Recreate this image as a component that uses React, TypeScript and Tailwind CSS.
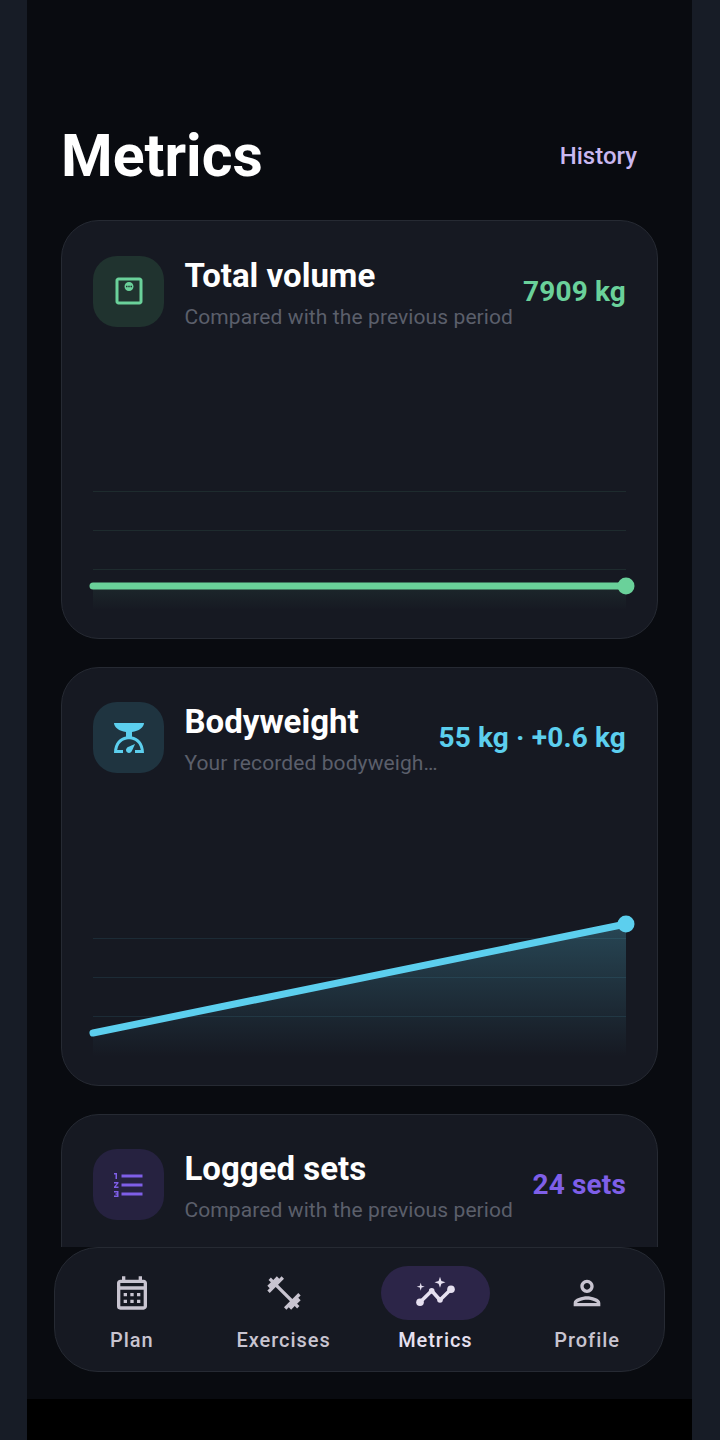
import type { ReactNode } from "react";
import {
  MdFitnessCenter,
  MdFormatListNumbered,
  MdOutlineCalendarMonth,
  MdOutlineMonitorWeight,
  MdOutlinePerson,
  MdScale,
} from "react-icons/md";

const Chart = ({ color, id, y0, y1, fill }: { color: string; id: string; y0: number; y1: number; fill: number }) => (
  <svg width="597" height="240" viewBox="0 0 597 240" className="block">
    <defs>
      <linearGradient id={id} x1="0" y1="0" x2="0" y2="1">
        <stop offset="0" stopColor={color} stopOpacity={fill} />
        <stop offset="1" stopColor={color} stopOpacity="0" />
      </linearGradient>
    </defs>
    <path d={`M32 ${y0}L565 ${y1}V230H32Z`} fill={`url(#${id})`} />
    {[111, 150, 189].map((y) => (
      <line key={y} x1="32" x2="565" y1={y + 0.5} y2={y + 0.5} stroke={color} strokeOpacity="0.1" />
    ))}
    <line x1="32" y1={y0} x2="565" y2={y1} stroke={color} strokeWidth="7" strokeLinecap="round" />
    <circle cx="565" cy={y1} r="8.5" fill={color} />
  </svg>
);

const SparkGraph = () => (
  <svg width="40" height="40" viewBox="0 0 40 40" fill="none">
    <path d="M5 29.3L16.7 17.7L25 27L36 16.3" stroke="currentColor" strokeWidth="3.6" strokeLinejoin="round" strokeLinecap="round" />
    <circle cx="5" cy="29.3" r="3.8" fill="currentColor" />
    <circle cx="16.7" cy="17.7" r="2.8" fill="currentColor" />
    <circle cx="25" cy="27" r="2.8" fill="currentColor" />
    <circle cx="36" cy="16.3" r="3.8" fill="currentColor" />
    <path d="M25 3.8L26.4 7.9L30.5 9.3L26.4 10.7L25 14.8L23.6 10.7L19.5 9.3L23.6 7.9Z" fill="currentColor" />
    <path d="M5.7 9.7L6.6 12.8L9.7 13.7L6.6 14.6L5.7 17.7L4.8 14.6L1.7 13.7L4.8 12.8Z" fill="currentColor" />
  </svg>
);

const MetricCard = ({
  icon,
  boxClass,
  title,
  subtitle,
  value,
  valueClass,
  children,
}: {
  icon: ReactNode;
  boxClass: string;
  title: string;
  subtitle: string;
  value: string;
  valueClass: string;
  children?: ReactNode;
}) => (
  <section className="h-[418.8px] flex-none rounded-[38px] border border-[#262a33] bg-[#161922]">
    <div className="mt-[34.6px] flex h-[71px] items-center px-[31px]">
      <div className={`flex h-[71px] w-[71px] flex-none items-center justify-center rounded-[24px] ${boxClass}`}>
        {icon}
      </div>
      <div className="ml-[20.5px] min-w-0 flex-1 self-start">
        <div className="mt-px text-[33px] font-bold leading-[38px] text-white">{title}</div>
        <div className="mt-[8px] whitespace-nowrap text-[21px] leading-[28px] tracking-[0.1px] text-[#5b5f6b]">{subtitle}</div>
      </div>
      <div className={`ml-[2px] flex-none pt-px text-[28px] font-bold tracking-[0.15px] ${valueClass}`}>{value}</div>
    </div>
    <div className="-mx-px mt-[53.4px]">{children}</div>
  </section>
);

const NavItem = ({ icon, label, active }: { icon: ReactNode; label: string; active?: boolean }) => (
  <div className={`flex flex-col items-center ${active ? "text-[#e6e0f0]" : "text-[#c8c4d0]"}`}>
    <div className={`flex h-[54px] w-[109px] items-center justify-center rounded-full ${active ? "bg-[#2c2548]" : ""}`}>
      {icon}
    </div>
    <div className="mt-[6px] text-[20px] font-medium leading-[28px] tracking-[0.95px]">{label}</div>
  </div>
);

export default function App() {
  return (
    <div className="flex h-[1440px] w-[720px] overflow-hidden bg-black font-['Roboto',sans-serif]">
      <div className="w-[27px] flex-none bg-[#171c26]" />
      <div className="h-[1399px] w-[665px] flex-none bg-[#090b10]">
        <div className="h-[1247px] overflow-hidden">
          <div className="flex h-[220px] items-end justify-between pb-[28px] pl-[34px] pr-[55px]">
            <h1 className="text-[59px] font-bold leading-[72px] text-white">Metrics</h1>
            <span className="pb-[20px] text-[24px] font-medium leading-[32px] text-[#c9b8f0]">History</span>
          </div>
          <div className="flex flex-col gap-[28px] px-[34px]">
            <MetricCard
              icon={<MdOutlineMonitorWeight size={36} color="#6ad19a" />}
              boxClass="bg-[#20332f]"
              title="Total volume"
              subtitle="Compared with the previous period"
              value="7909 kg"
              valueClass="text-[#6ad19a]"
            >
              <Chart color="#6ad19a" id="fill-volume" y0={206} y1={206} fill={0.08} />
            </MetricCard>
            <MetricCard
              icon={<MdScale size={36} color="#5ccfee" />}
              boxClass="bg-[#1f3440]"
              title="Bodyweight"
              subtitle="Your recorded bodyweigh…"
              value="55 kg · +0.6 kg"
              valueClass="text-[#5ccfee]"
            >
              <Chart color="#5ccfee" id="fill-weight" y0={206} y1={97} fill={0.25} />
            </MetricCard>
            <MetricCard
              icon={<MdFormatListNumbered size={36} color="#7f5fe8" />}
              boxClass="bg-[#262240]"
              title="Logged sets"
              subtitle="Compared with the previous period"
              value="24 sets"
              valueClass="text-[#7f5fe8]"
            />
          </div>
        </div>
        <nav className="mx-[27px] grid h-[125px] grid-cols-4 rounded-[44px] border border-[#262a33] bg-[#161922] px-px pt-[18px]">
          <NavItem icon={<MdOutlineCalendarMonth size={40} />} label="Plan" />
          <NavItem icon={<MdFitnessCenter size={40} />} label="Exercises" />
          <NavItem icon={<SparkGraph />} label="Metrics" active />
          <NavItem icon={<MdOutlinePerson size={40} />} label="Profile" />
        </nav>
      </div>
      <div className="flex-1 bg-[#171c26]" />
    </div>
  );
}
